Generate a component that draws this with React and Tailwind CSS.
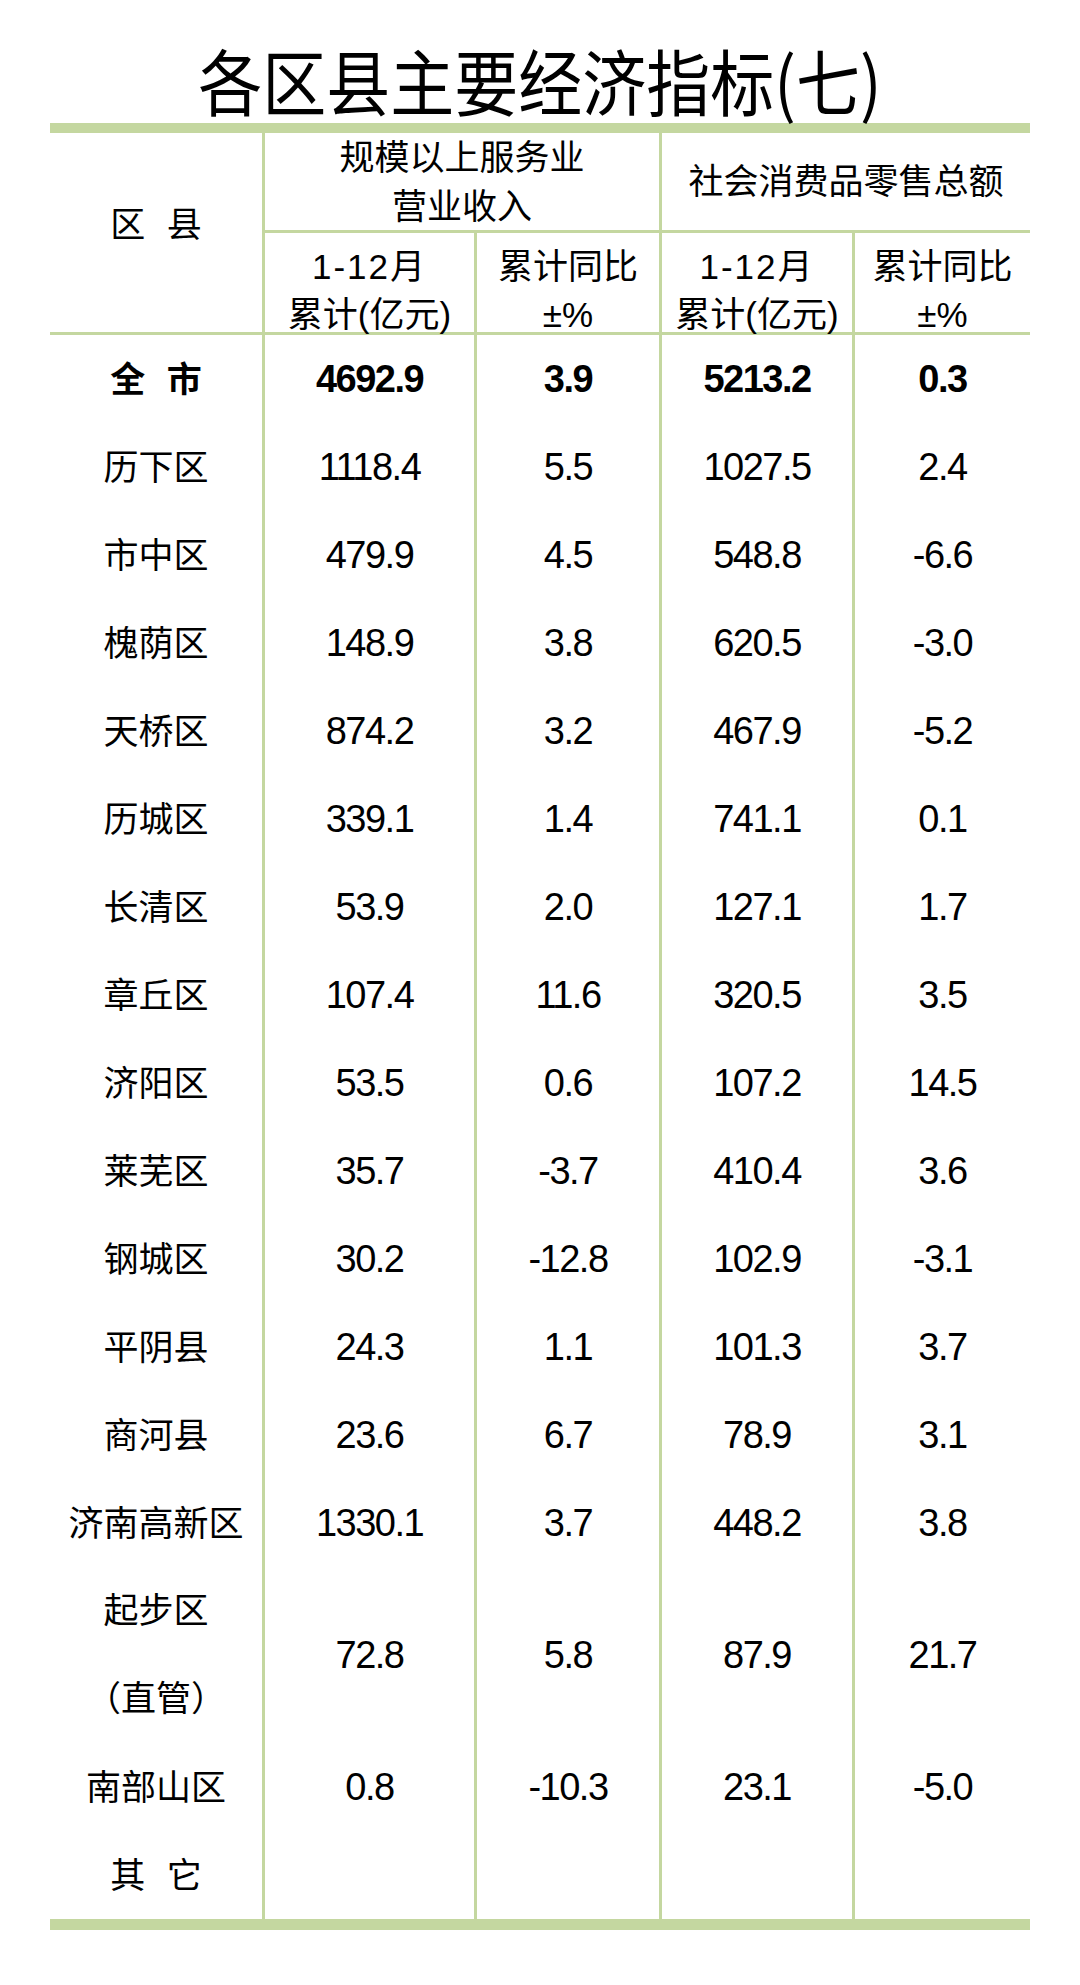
import React from "react";

const rows = [
  ["全 市", "4692.9", "3.9", "5213.2", "0.3", true],
  ["历下区", "1118.4", "5.5", "1027.5", "2.4"],
  ["市中区", "479.9", "4.5", "548.8", "-6.6"],
  ["槐荫区", "148.9", "3.8", "620.5", "-3.0"],
  ["天桥区", "874.2", "3.2", "467.9", "-5.2"],
  ["历城区", "339.1", "1.4", "741.1", "0.1"],
  ["长清区", "53.9", "2.0", "127.1", "1.7"],
  ["章丘区", "107.4", "11.6", "320.5", "3.5"],
  ["济阳区", "53.5", "0.6", "107.2", "14.5"],
  ["莱芜区", "35.7", "-3.7", "410.4", "3.6"],
  ["钢城区", "30.2", "-12.8", "102.9", "-3.1"],
  ["平阴县", "24.3", "1.1", "101.3", "3.7"],
  ["商河县", "23.6", "6.7", "78.9", "3.1"],
  ["济南高新区", "1330.1", "3.7", "448.2", "3.8"],
];

function NumCell({ v, bold, tall }) {
  return (
    <div
      className={`${tall ? "h-[176px]" : "h-[88px]"} border-l-[3px] border-[#c4d7a0] flex items-center justify-center text-[38px] tracking-[-1.5px] leading-none ${bold ? "font-bold" : "font-normal"}`}
    >
      {v}
    </div>
  );
}

export default function App() {
  return (
    <div className="w-[1080px] h-[1985px] bg-white text-black font-['Liberation_Sans','Noto_Sans_CJK_SC',sans-serif]">
      <div className="h-[123px] flex items-center justify-center pt-[34px]">
        <h1 className="text-[64px] font-normal leading-none scale-y-[1.12] font-['Noto_Sans_CJK_SC',sans-serif]">
          各区县主要经济指标(七)
        </h1>
      </div>
      <div className="ml-[50px] w-[980px]">
        <div className="h-[10px] bg-[#c4d7a0]" />
        <div className="grid grid-cols-[212px_212px_185px_193px_178px] grid-rows-[100px_99px] text-[35px]">
          <div className="row-span-2 flex items-center justify-center pb-[17px] leading-none [word-spacing:12px]">
            区 县
          </div>
          <div className="col-span-2 border-l-[3px] border-b-[3px] border-[#c4d7a0] flex flex-col items-center justify-center leading-[49px]">
            <span>规模以上服务业</span>
            <span>营业收入</span>
          </div>
          <div className="col-span-2 border-l-[3px] border-b-[3px] border-[#c4d7a0] flex items-center justify-center leading-none">
            社会消费品零售总额
          </div>
          <div className="border-l-[3px] border-[#c4d7a0] flex flex-col items-center justify-center pt-[17px] leading-[48px]">
            <span className="tracking-[2px]">1-12月</span>
            <span>累计(亿元)</span>
          </div>
          <div className="border-l-[3px] border-[#c4d7a0] flex flex-col items-center justify-center pt-[17px] leading-[48px]">
            <span>累计同比</span>
            <span>±%</span>
          </div>
          <div className="border-l-[3px] border-[#c4d7a0] flex flex-col items-center justify-center pt-[17px] leading-[48px]">
            <span className="tracking-[2px]">1-12月</span>
            <span>累计(亿元)</span>
          </div>
          <div className="border-l-[3px] border-[#c4d7a0] flex flex-col items-center justify-center pt-[17px] leading-[48px]">
            <span>累计同比</span>
            <span>±%</span>
          </div>
        </div>
        <div className="h-[3px] bg-[#c4d7a0]" />
        <div className="grid grid-cols-[212px_212px_185px_193px_178px]">
          {rows.map((r) => (
            <React.Fragment key={r[0]}>
              <div
                className={`h-[88px] flex items-center justify-center text-[35px] leading-none [word-spacing:12px] ${r[5] ? "font-bold" : "font-normal"}`}
              >
                {r[0]}
              </div>
              <NumCell v={r[1]} bold={r[5]} />
              <NumCell v={r[2]} bold={r[5]} />
              <NumCell v={r[3]} bold={r[5]} />
              <NumCell v={r[4]} bold={r[5]} />
            </React.Fragment>
          ))}
          <div className="h-[176px] flex flex-col items-center justify-center text-[35px] leading-[88px]">
            <span>起步区</span>
            <span>（直管）</span>
          </div>
          <NumCell v="72.8" tall />
          <NumCell v="5.8" tall />
          <NumCell v="87.9" tall />
          <NumCell v="21.7" tall />
          <div className="h-[88px] flex items-center justify-center text-[35px] leading-none">
            南部山区
          </div>
          <NumCell v="0.8" />
          <NumCell v="-10.3" />
          <NumCell v="23.1" />
          <NumCell v="-5.0" />
          <div className="h-[88px] flex items-center justify-center text-[35px] leading-none [word-spacing:12px]">
            其 它
          </div>
          <NumCell v="" />
          <NumCell v="" />
          <NumCell v="" />
          <NumCell v="" />
        </div>
        <div className="h-[11px] bg-[#c4d7a0]" />
      </div>
    </div>
  );
}
